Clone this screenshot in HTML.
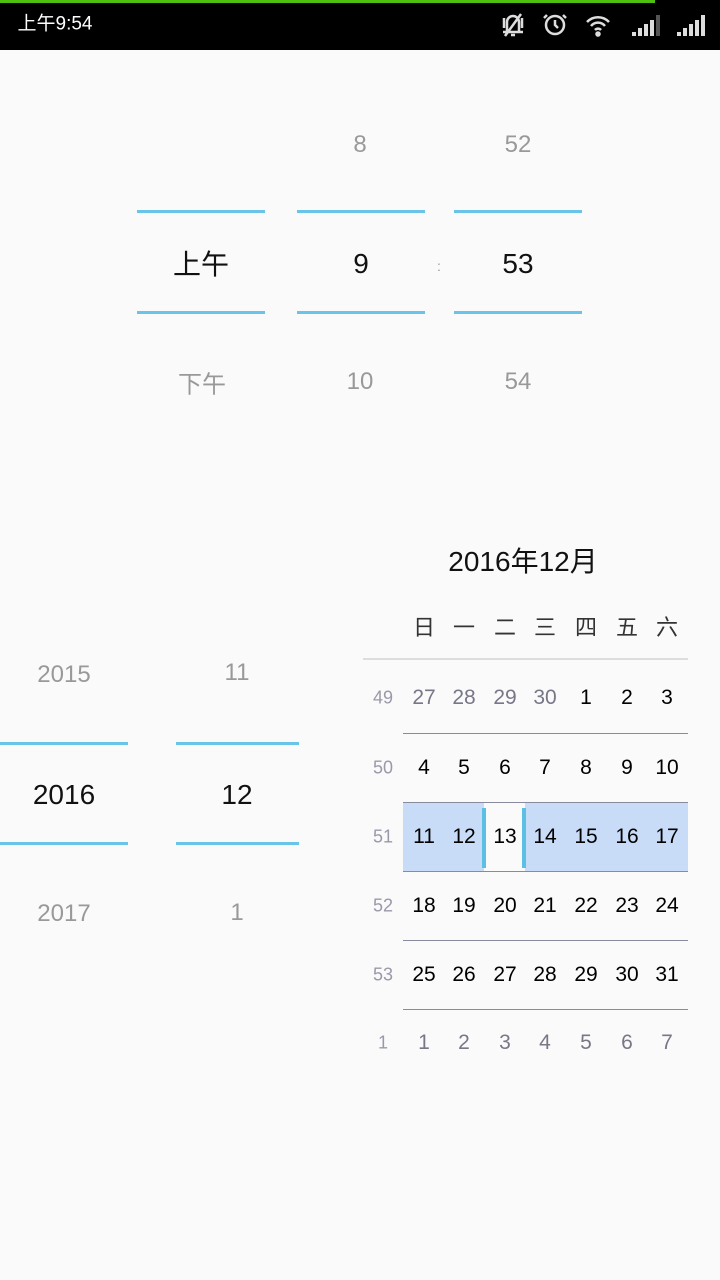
<!DOCTYPE html>
<html><head><meta charset="utf-8"><style>
body{margin:0;width:720px;height:1280px;background:#fafafa;position:relative;overflow:hidden;font-family:"Liberation Sans","Noto Sans CJK SC",sans-serif}
.a{position:absolute}
.t{position:absolute;transform:translate(-50%,-50%);white-space:nowrap}
.ln{position:absolute;height:3px;background:#68c5e8}
.g{color:#999;font-size:24px}
.b{color:#111;font-size:28px}
.c{font-size:21px;color:#000}
.gr{color:#778}
.sep{position:absolute;left:403px;width:285px;height:1px;background:#8a8a9e}
</style></head><body>
<div class="a" style="left:0;top:0;width:720px;height:50px;background:#000"></div>
<div class="a" style="left:0;top:0;width:655px;height:3px;background:#4ec010"></div>
<div class="t" style="left:55px;top:22px;color:#fff;font-size:19px">上午9:54</div>
<svg class="a" style="left:495px;top:10px" width="225" height="30" viewBox="0 0 225 30" fill="none" stroke="#ddd" stroke-width="2.5">
<path d="M12 22V12a6 6 0 0 1 12 0v10M8 22h20M16 25h4M9 8v10M27 8v10M10 26L26 4"/>
<circle cx="60" cy="15" r="9"/><path d="M60 10v5l3 3M52 5l-3 3M68 5l3 3"/>
<path d="M92 12a15 15 0 0 1 22 0M96 16a9 9 0 0 1 14 0M100 20a4 4 0 0 1 6 0"/><circle cx="103" cy="24" r="1.5" fill="#ddd"/>
<g fill="#ddd" stroke="none"><rect x="137" y="22" width="4" height="4"/><rect x="143" y="18" width="4" height="8"/><rect x="149" y="14" width="4" height="12"/><rect x="155" y="10" width="4" height="16"/><rect x="161" y="5" width="4" height="21" fill="#555"/>
<rect x="182" y="22" width="4" height="4"/><rect x="188" y="18" width="4" height="8"/><rect x="194" y="14" width="4" height="12"/><rect x="200" y="10" width="4" height="16"/><rect x="206" y="5" width="4" height="21"/></g>
</svg>

<div class="t g" style="left:360px;top:145px">8</div>
<div class="t g" style="left:518px;top:145px">52</div>
<div class="ln" style="left:137px;top:210px;width:128px"></div>
<div class="ln" style="left:297px;top:210px;width:128px"></div>
<div class="ln" style="left:454px;top:210px;width:128px"></div>
<div class="ln" style="left:137px;top:311px;width:128px"></div>
<div class="ln" style="left:297px;top:311px;width:128px"></div>
<div class="ln" style="left:454px;top:311px;width:128px"></div>
<div class="t b" style="left:201px;top:263px">上午</div>
<div class="t b" style="left:361px;top:264px">9</div>
<div class="t" style="left:439px;top:266px;color:#999;font-size:14px">:</div>
<div class="t b" style="left:518px;top:264px">53</div>
<div class="t g" style="left:202px;top:382px">下午</div>
<div class="t g" style="left:360px;top:382px">10</div>
<div class="t g" style="left:518px;top:382px">54</div>

<div class="t g" style="left:64px;top:675px">2015</div>
<div class="t g" style="left:237px;top:673px">11</div>
<div class="ln" style="left:0;top:742px;width:128px"></div>
<div class="ln" style="left:176px;top:742px;width:123px"></div>
<div class="ln" style="left:0;top:842px;width:128px"></div>
<div class="ln" style="left:176px;top:842px;width:123px"></div>
<div class="t b" style="left:64px;top:795px">2016</div>
<div class="t b" style="left:237px;top:795px">12</div>
<div class="t g" style="left:64px;top:914px">2017</div>
<div class="t g" style="left:237px;top:913px">1</div>

<div class="t" style="left:523px;top:560px;font-size:28px;color:#111">2016年12月</div>
<div class="a" style="left:363px;top:658px;width:325px;height:2px;background:#ddd"></div>
<div class="a" style="left:403px;top:803px;width:285px;height:68px;background:#c8dcf8"></div>
<div class="a" style="left:484px;top:803px;width:41px;height:68px;background:#fafafa"></div>
<div class="a" style="left:482px;top:808px;width:4px;height:60px;background:#5bc0e4"></div>
<div class="a" style="left:522px;top:808px;width:4px;height:60px;background:#5bc0e4"></div>
<div class="sep" style="top:733px"></div><div class="sep" style="top:802px"></div><div class="sep" style="top:871px"></div><div class="sep" style="top:940px"></div><div class="sep" style="top:1009px"></div>
<div id="cal"></div>
<script>
var xs=[383,424,464,505,545,586,627,667],ys=[698,768,837,906,975,1043];
var h=["日","一","二","三","四","五","六"],o="";
h.forEach(function(s,i){o+='<div class="t" style="left:'+xs[i+1]+'px;top:626px;font-size:22px;color:#333">'+s+'</div>'});
var rows=[[49,27,28,29,30,1,2,3],[50,4,5,6,7,8,9,10],[51,11,12,13,14,15,16,17],[52,18,19,20,21,22,23,24],[53,25,26,27,28,29,30,31],[1,1,2,3,4,5,6,7]];
rows.forEach(function(r,ri){r.forEach(function(v,ci){var grey=ci==0||(ri==0&&ci<5)||ri==5;
o+='<div class="t c" style="left:'+xs[ci]+'px;top:'+ys[ri]+'px;color:'+(ci==0?'#99a':grey?'#778':'#000')+';font-size:'+(ci==0?18:21)+'px">'+v+'</div>'})});
document.getElementById('cal').innerHTML=o;
</script>
</body></html>
